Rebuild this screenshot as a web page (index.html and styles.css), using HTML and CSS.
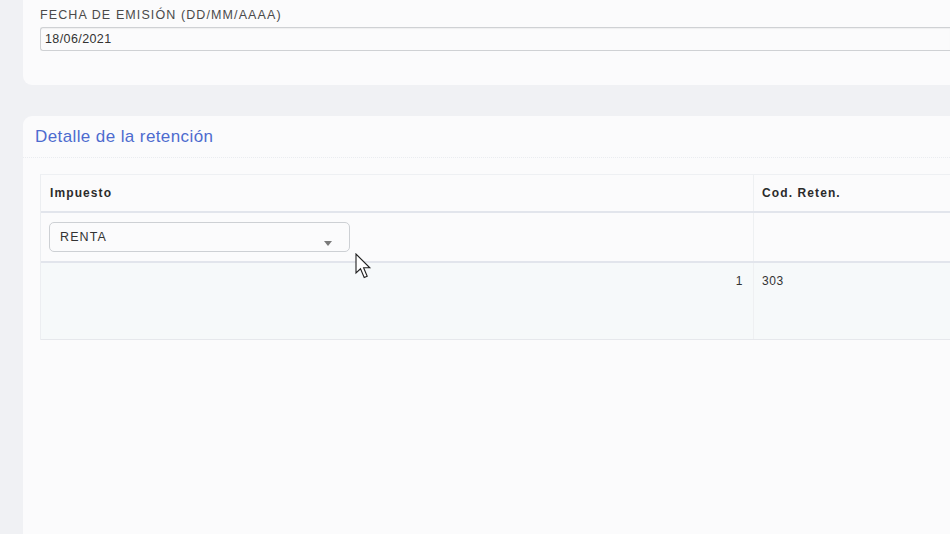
FILE: index.html
```html
<!DOCTYPE html>
<html lang="es">
<head>
<meta charset="utf-8">
<title>Retención</title>
<link rel="stylesheet" href="styles.css">
</head>
<body>
<div class="page">
  <section class="card card-top">
    <label class="field-label">FECHA DE EMISIÓN (DD/MM/AAAA)</label>
    <div class="input">18/06/2021</div>
  </section>
  <section class="card card-detail">
    <h2 class="title">Detalle de la retención</h2>
    <div class="divider"></div>
    <div class="table">
      <div class="row head">
        <div class="cell c1">Impuesto</div>
        <div class="cell c2">Cod. Reten.</div>
      </div>
      <div class="row edit">
        <div class="cell c1">
          <div class="select">
            <span>RENTA</span>
            <span class="caret"></span>
          </div>
        </div>
        <div class="cell c2"></div>
      </div>
      <div class="row data">
        <div class="cell c1 num">1</div>
        <div class="cell c2">303</div>
      </div>
    </div>
  </section>
</div>
<svg class="cursor" width="18" height="27" viewBox="0 0 18 27" xmlns="http://www.w3.org/2000/svg">
  <path d="M1 1 L1 20 L5.5 15.8 L9.2 24.5 L12.2 23.2 L8.6 14.8 L14.8 14.8 Z" fill="#fff" stroke="#222" stroke-width="1.1" stroke-linejoin="miter"/>
</svg>
</body>
</html>
```
FILE: styles.css
```css
html, body {
  margin: 0;
  padding: 0;
  height: 100%;
  overflow: hidden;
}
body {
  background: #f0f1f4;
  font-family: "Liberation Sans", Arial, sans-serif;
  color: #333;
  position: relative;
}
.page {
  padding-left: 23px;
  display: flex;
  flex-direction: column;
  gap: 31px;
  height: 100%;
  box-sizing: border-box;
}
.card {
  background: #fbfbfc;
}
.card-top {
  height: 85px;
  box-sizing: border-box;
  padding: 8px 0 0 17px;
  border-bottom-left-radius: 9px;
  display: flex;
  flex-direction: column;
}
.field-label {
  font-size: 12.5px;
  letter-spacing: 1.1px;
  color: #4a4a4a;
  line-height: 14px;
  height: 19px;
}
.input {
  height: 24px;
  box-sizing: border-box;
  border: 1px solid #cfd1d4;
  border-right: none;
  border-radius: 3px 0 0 3px;
  font-size: 12.5px;
  letter-spacing: 0.4px;
  line-height: 23px;
  padding-left: 4px;
  color: #333;
  box-shadow: inset 0 1px 1px rgba(0,0,0,0.05);
}
.card-detail {
  flex: 1;
  border-top-left-radius: 9px;
  padding: 0 0 0 17px;
  display: flex;
  flex-direction: column;
}
.title {
  margin: 0 0 0 -5px;
  font-weight: normal;
  font-size: 17px;
  color: #4d6bcf;
  line-height: 20px;
  padding-top: 11px;
  height: 30px;
  letter-spacing: 0.4px;
}
.divider {
  margin-left: -17px;
  border-top: 1px dotted #eaecf0;
  height: 0;
  margin-bottom: 16px;
}
.table {
  border-left: 1px solid #eceef1;
  border-top: 1px solid #eef0f3;
  display: flex;
  flex-direction: column;
}
.row {
  display: flex;
  box-sizing: border-box;
}
.cell {
  box-sizing: border-box;
}
.c1 {
  width: 713px;
  border-right: 1px solid #eef0f2;
}
.c2 {
  flex: 1;
  padding-left: 8px;
}
.head {
  height: 38px;
  border-bottom: 2px solid #e2e5ec;
  font-weight: bold;
  font-size: 12px;
  letter-spacing: 1.1px;
  color: #2b2b2b;
}
.head .cell {
  line-height: 37px;
}
.head .c1 {
  padding-left: 9px;
}
.edit {
  height: 50px;
  border-bottom: 2px solid #e2e5ec;
}
.edit .c1 {
  padding: 9px 0 0 8px;
}
.select {
  width: 301px;
  height: 30px;
  box-sizing: border-box;
  border: 1px solid #cdd0d4;
  border-radius: 5px;
  background: #fbfbfc;
  display: flex;
  align-items: center;
  justify-content: space-between;
  padding: 0 17px 0 10px;
  font-size: 12.5px;
  letter-spacing: 1.1px;
  color: #333;
}
.caret {
  width: 0;
  height: 0;
  border-left: 4px solid transparent;
  border-right: 4px solid transparent;
  border-top: 5px solid #7a7a7a;
  margin-top: 12px;
}
.data {
  height: 77px;
  background: #f6f9fa;
  border-bottom: 1px solid #e6e8ec;
  font-size: 12px;
  color: #333;
}
.data .cell {
  padding-top: 11px;
  line-height: 14px;
  letter-spacing: 0.6px;
}
.data .num {
  text-align: right;
  padding-right: 10px;
}
.cursor {
  position: absolute;
  left: 355px;
  top: 253px;
}
```
